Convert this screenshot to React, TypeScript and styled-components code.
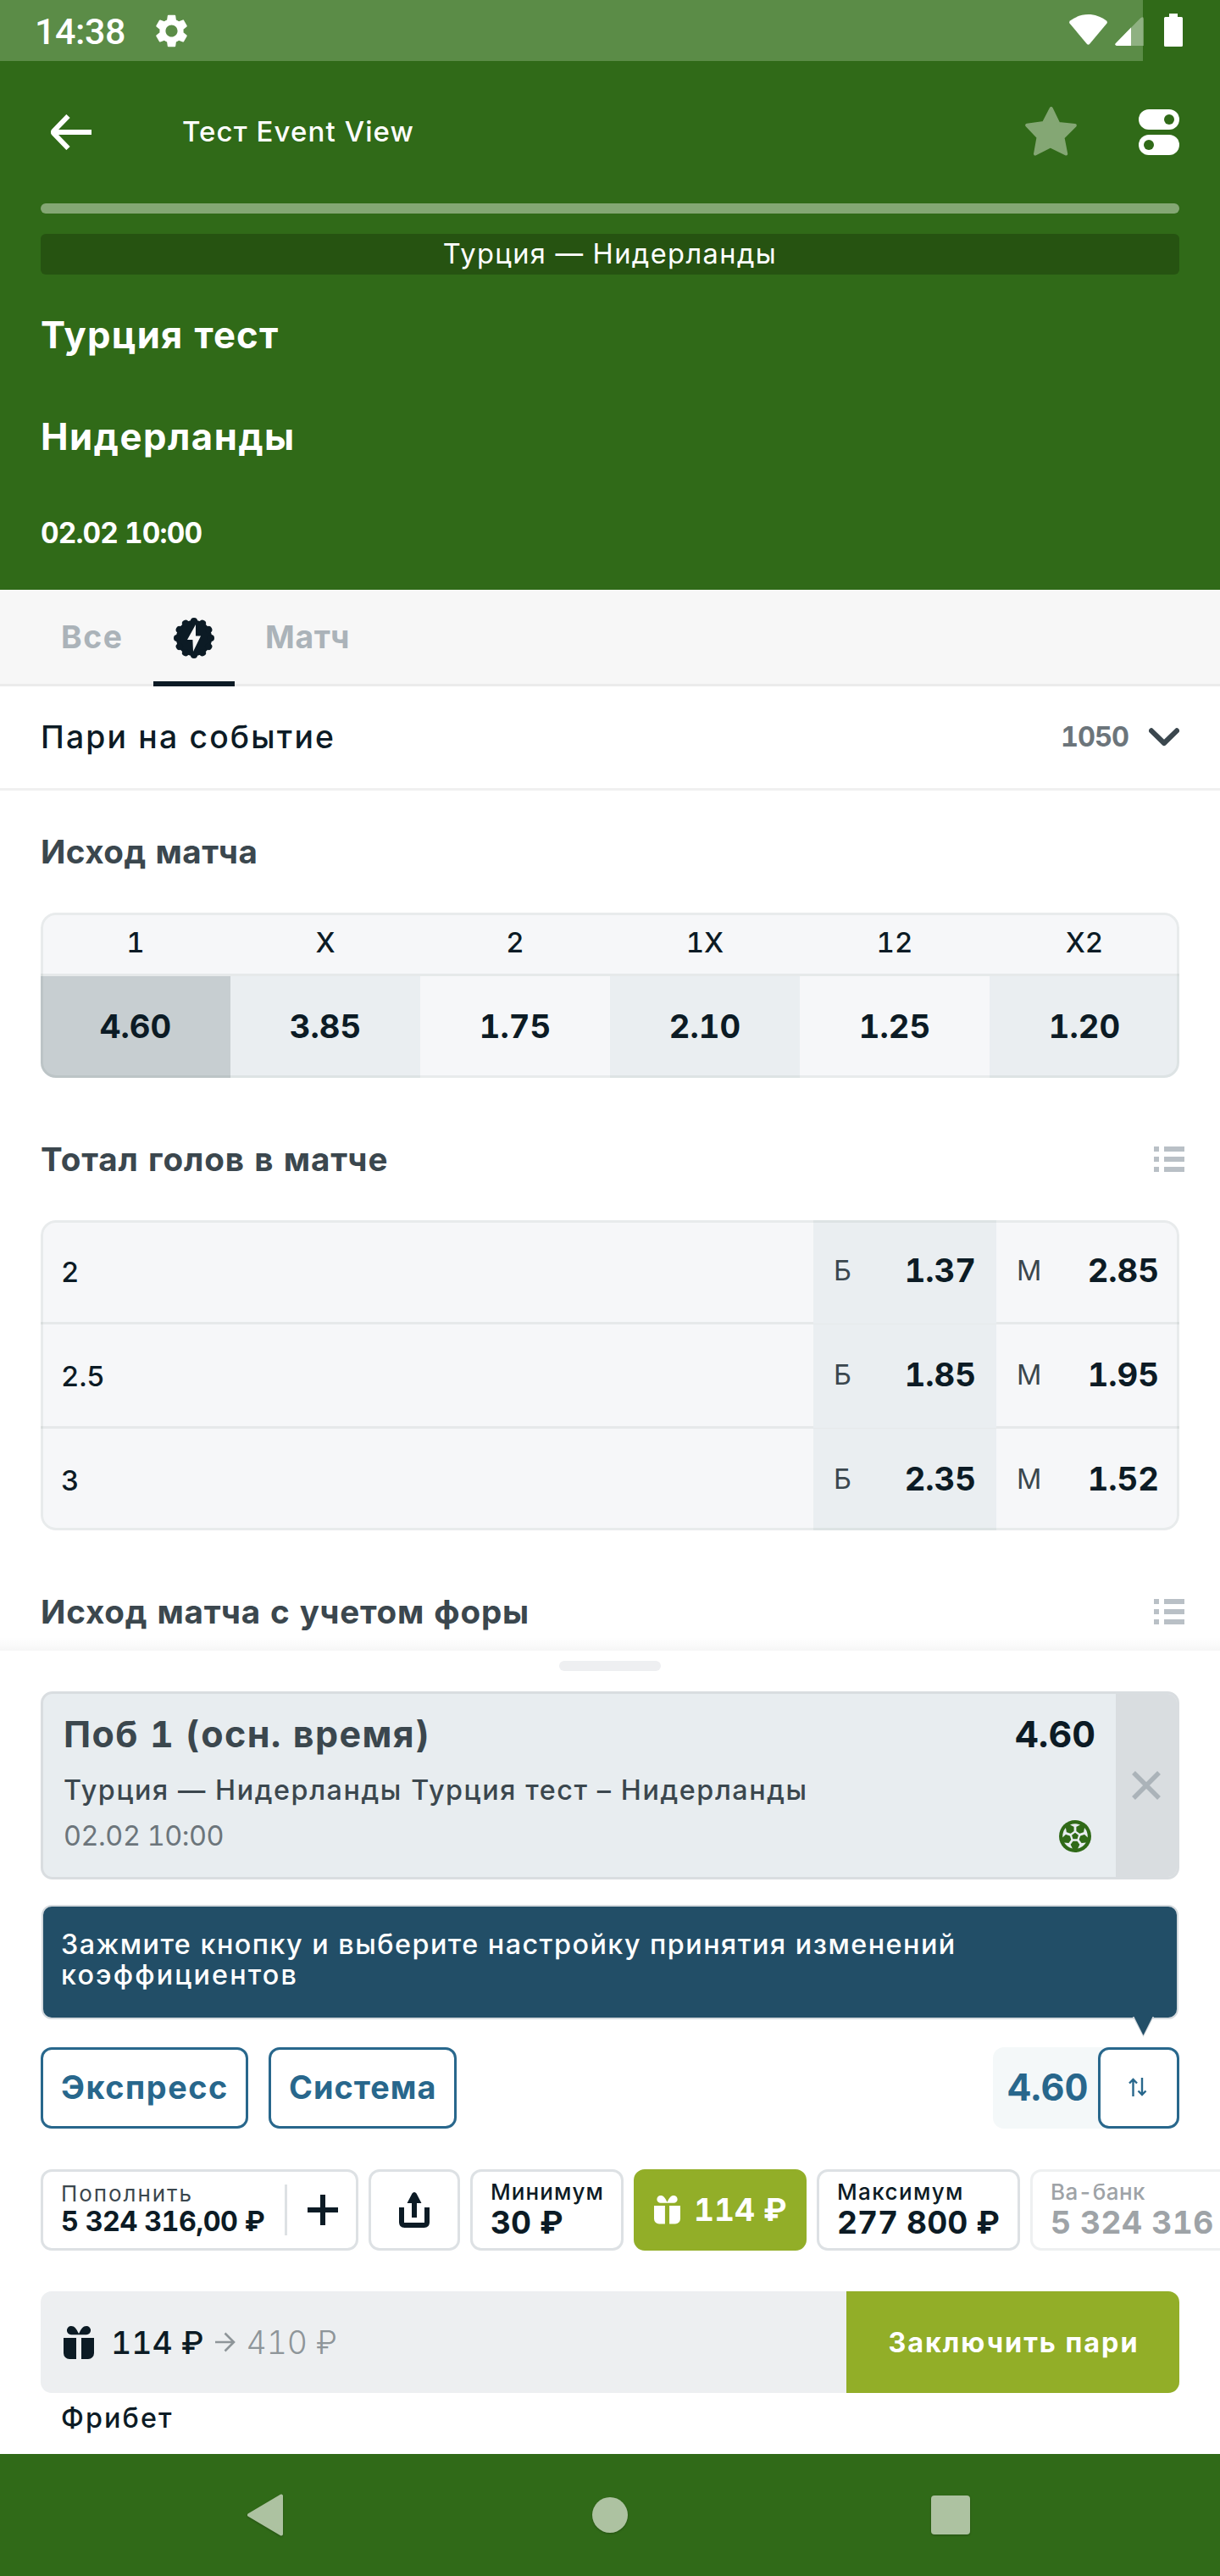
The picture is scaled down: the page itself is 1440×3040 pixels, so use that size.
import React from "react";
import styled, { createGlobalStyle, css } from "styled-components";
import { MdSettings } from "react-icons/md";

const color = {
  green: "#306a18",
  greenLight: "#5b8c47",
  greenSoft: "#84a774",
  greenDark: "#265311",
  lime: "#92ae28",
  ink: "#0c1b25",
  slate: "#3b474e",
  grey: "#6c757b",
  mute: "#abb3b9",
  line: "#dde1e4",
  cell: "#f6f7f9",
  cellAlt: "#eaeef1",
  blue: "#28678c",
  navy: "#224e67",
};

const GlobalStyle = createGlobalStyle`
  *, *::before, *::after { box-sizing: border-box; }
  body {
    margin: 0;
    background: #fff;
    color: ${color.ink};
    font-family: Inter, "Liberation Sans", sans-serif;
    font-variant-numeric: tabular-nums;
  }
  svg { display: block; flex: none; }
`;

interface TypeProps {
  $ls?: number;
}

const type = (size: number, weight: number, line: number) => css<TypeProps>`
  font-size: ${size}px;
  font-weight: ${weight};
  line-height: ${line}px;
  letter-spacing: ${(p) => p.$ls ?? 0}px;
  white-space: nowrap;
`;

const Screen = styled.div`
  width: 1440px;
  height: 3040px;
  display: flex;
  flex-direction: column;
  overflow: hidden;
`;

/* ---------- status bar ---------- */

const StatusBar = styled.div`
  height: 72px;
  display: flex;
  background: linear-gradient(to right, ${color.greenLight} 1349px, ${color.green} 1349px);
`;
const StatusLeft = styled.div`
  flex: 1;
  display: flex;
  align-items: center;
  padding-left: 41px;
  color: #fff;
`;
const Clock = styled.span`
  ${type(43, 500, 50)}
  font-family: Roboto, sans-serif;
  padding-top: 2px;
  width: 138px;
`;
const StatusRight = styled.div`
  display: flex;
  align-items: flex-start;
  padding: 16px 44px 0 0;
`;
const Wifi = styled.svg`
  margin-top: 1px;
`;
const Signal = styled.svg`
  margin: 4px 24px 0 9px;
`;

/* ---------- event header ---------- */

const Header = styled.header`
  height: 624px;
  background: ${color.green};
  color: #fff;
  padding: 0 48px;
`;
const AppBar = styled.div`
  height: 168px;
  display: flex;
  align-items: center;
`;
const BackIcon = styled.svg`
  margin-left: 12px;
`;
const Title = styled.h1`
  ${type(33, 500, 40)}
  margin: 0 auto 2px 107px;
`;
const StarIcon = styled.svg`
  margin: 0 73px 2px 0;
`;
const Progress = styled.div`
  height: 12px;
  border-radius: 6px;
  background: ${color.greenSoft};
`;
const Banner = styled.div`
  height: 48px;
  margin-top: 24px;
  border-radius: 6px;
  background: ${color.greenDark};
  display: flex;
  justify-content: center;
  ${type(32.6, 400, 47)}
`;
const Teams = styled.div`
  padding-top: 12px;
`;
const Team = styled.div`
  ${type(43.6, 700, 120)}
`;
const Kickoff = styled.div`
  ${type(33.4, 700, 107)}
`;

/* ---------- market tabs ---------- */

const Tabs = styled.nav`
  height: 114px;
  flex: none;
  background: #f7f7f7;
  border-bottom: 3px solid #ebebeb;
  display: flex;
  gap: 12px;
  padding-left: 48px;
`;
const Tab = styled.div<{ $width: number; $active?: boolean } & TypeProps>`
  ${type(37.3, 700, 112)}
  height: 114px;
  width: ${(p) => p.$width}px;
  padding-left: 24px;
  color: ${color.mute};
  ${(p) =>
    p.$active &&
    css`
      padding-top: 33px;
      border-bottom: 6px solid ${color.ink};
    `}
`;

/* ---------- market list ---------- */

const Markets = styled.main`
  position: relative;
  height: 1138px;
  flex: none;
  overflow: hidden;
`;
const EventRow = styled.div`
  height: 123px;
  border-bottom: 3px solid #f0f0f0;
  padding: 0 48px;
  display: flex;
  align-items: center;
`;
const EventName = styled.span`
  ${type(37.3, 500, 50)}
  flex: 1;
`;
const EventCount = styled.span`
  ${type(32.5, 700, 50)}
  color: ${color.grey};
  margin-right: 24px;
`;
const MarketTitle = styled.div<{ $gap?: number }>`
  height: 144px;
  margin-top: ${(p) => p.$gap ?? 0}px;
  padding: 0 42px 0 48px;
  display: flex;
  align-items: center;
  justify-content: space-between;
`;
const MarketName = styled.h2`
  ${type(38.6, 700, 50)}
  margin: 0 0 1px;
  color: ${color.slate};
`;
const Table = styled.div`
  position: relative;
  margin: 0 48px;
  border-radius: 18px;
  overflow: hidden;
  background: ${color.cell};
  &::after {
    content: "";
    position: absolute;
    inset: 0;
    border: 3px solid rgba(10, 50, 30, 0.06);
    border-radius: 18px;
  }
`;
const OutcomeGrid = styled.div`
  display: grid;
  grid-template-columns: repeat(6, 224px);
`;
const OutcomeHead = styled.div`
  ${type(33, 500, 70)}
  height: 75px;
  border-bottom: 3px solid #e6e9ea;
  text-align: center;
`;
const OutcomeOdds = styled.div<{ $tone: "plain" | "alt" | "picked" }>`
  ${type(38.2, 700, 118)}
  height: 120px;
  text-align: center;
  background: ${(p) => ({ plain: color.cell, alt: color.cellAlt, picked: "#c7ced1" })[p.$tone]};
`;
const TotalRow = styled.div`
  height: 120px;
  display: grid;
  grid-template-columns: 912px 216px 216px;
  & + & {
    height: 123px;
    border-top: 3px solid #e6e9ea;
  }
`;
const TotalLabel = styled.div`
  ${type(33, 500, 122)}
  padding-left: 24px;
`;
const TotalCell = styled.div<{ $alt?: boolean }>`
  display: flex;
  justify-content: space-between;
  padding: 0 24px;
  background: ${(p) => (p.$alt ? color.cellAlt : "transparent")};
`;
const TotalSide = styled.span`
  ${type(32.5, 400, 119)}
  color: ${color.slate};
`;
const TotalOdds = styled.span`
  ${type(38.2, 700, 118)}
`;
const SheetShadow = styled.div`
  position: absolute;
  left: 0;
  right: 0;
  bottom: 0;
  height: 16px;
  background: linear-gradient(rgba(0, 0, 0, 0), rgba(0, 0, 0, 0.035));
`;

/* ---------- bet slip sheet ---------- */

const Sheet = styled.section`
  height: 948px;
  flex: none;
  padding: 12px 0 0 48px;
  background: #fff;
`;
const Handle = styled.div`
  width: 120px;
  height: 12px;
  margin: 0 0 24px 612px;
  border-radius: 6px;
  background: #eeeff1;
`;
const BetCard = styled.div`
  width: 1344px;
  height: 222px;
  display: flex;
  border: 3px solid #d9dde0;
  border-radius: 14px;
  overflow: hidden;
  background: #e8edf0;
`;
const BetInfo = styled.div`
  flex: 1;
  padding: 14px 0 0 24px;
`;
const BetName = styled.div`
  ${type(43, 700, 66)}
  color: ${color.slate};
`;
const BetEvent = styled.div`
  ${type(32.3, 500, 67)}
  color: ${color.slate};
`;
const BetTime = styled.div`
  ${type(32.4, 400, 42)}
  color: ${color.grey};
`;
const BetSide = styled.div`
  padding: 14px 24px 0 0;
  display: flex;
  flex-direction: column;
  align-items: flex-end;
`;
const BetOdds = styled.span`
  ${type(43, 700, 66)}
`;
const BallIcon = styled.svg`
  margin: 69px 5px 0 0;
`;
const BetClose = styled.button`
  width: 72px;
  padding: 0;
  border: 0;
  background: #d9dde0;
  display: flex;
  align-items: center;
  justify-content: center;
`;
const Hint = styled.div`
  position: relative;
  width: 1342px;
  height: 135px;
  margin: 30px 0 33px 1px;
  padding: 27px 21px;
  border: 2px solid #d5dade;
  border-radius: 12px;
  background: ${color.navy};
  color: #fff;
`;
const HintLine = styled.div`
  ${type(32.3, 500, 36)}
`;
const HintTail = styled.svg`
  position: absolute;
  left: 1286px;
  top: 130px;
`;
const ModeRow = styled.div`
  width: 1344px;
  display: flex;
`;
const ModeButton = styled.button<{ $width: number } & TypeProps>`
  ${type(37.8, 700, 88)}
  width: ${(p) => p.$width}px;
  height: 96px;
  margin-right: 24px;
  padding: 0 0 2px 21px;
  border: 3px solid ${color.blue};
  border-radius: 13px;
  background: #fff;
  color: ${color.blue};
  font-family: inherit;
  text-align: left;
`;
const TotalOddsBox = styled.div`
  ${type(43.3, 700, 94)}
  width: 142px;
  height: 96px;
  margin: 0 -18px 0 auto;
  padding-left: 17px;
  border-radius: 13px;
  background: #f4f8f9;
  color: ${color.blue};
`;
const SwapButton = styled.button`
  width: 96px;
  height: 96px;
  padding: 0 2px 2px 0;
  border: 3px solid ${color.blue};
  border-radius: 13px;
  background: #fff;
  display: flex;
  align-items: center;
  justify-content: center;
  z-index: 1;
`;
const ChipRow = styled.div`
  margin-top: 48px;
  display: flex;
  gap: 12px;
  overflow: hidden;
`;
const Chip = styled.div<{ $width: number; $kind?: "lime" | "faded" }>`
  width: ${(p) => p.$width}px;
  height: 96px;
  flex: none;
  display: flex;
  align-items: center;
  padding: 0 21px;
  border: 3px solid ${color.line};
  border-radius: 13px;
  ${(p) =>
    p.$kind === "lime" &&
    css`
      border-color: ${color.lime};
      background: ${color.lime};
      color: #fff;
    `}
  ${(p) =>
    p.$kind === "faded" &&
    css`
      border-color: #eef0f1;
      color: #9ea3a7;
    `}
`;
const ChipText = styled.div<{ $lift: number }>`
  display: flex;
  flex-direction: column;
  align-items: flex-start;
  padding-bottom: ${(p) => p.$lift}px;
`;
const ChipLabel = styled.span`
  ${type(26, 500, 36)}
`;
const ChipValue = styled.span`
  ${type(37.2, 700, 36)}
`;
const BalanceLabel = styled.span`
  ${type(26, 400, 32)}
  color: ${color.slate};
`;
const BalanceValue = styled.span`
  ${type(32.3, 700, 34)}
`;
const Divider = styled.div`
  width: 3px;
  height: 60px;
  margin: 0 24px 0 auto;
  background: ${color.line};
`;
const FreebetValue = styled.span`
  ${type(37.2, 700, 88)}
  margin-left: 16px;
`;
const StakeRow = styled.div`
  width: 1344px;
  height: 120px;
  margin-top: 48px;
  display: flex;
  border-radius: 13px;
  overflow: hidden;
`;
const StakeField = styled.div`
  width: 951px;
  display: flex;
  align-items: center;
  padding-left: 27px;
  background: #edeff1;
`;
const Stake = styled.span`
  ${type(37.4, 500, 119)}
  margin-left: 20px;
`;
const StakeArrow = styled.svg`
  margin: 0 12px 0 14px;
`;
const Payout = styled.span`
  ${type(37.4, 300, 119)}
  color: #8e9599;
`;
const SubmitButton = styled.button`
  ${type(32.3, 700, 118)}
  flex: 1;
  padding: 1px 0 0 2px;
  border: 0;
  background: ${color.lime};
  color: #fff;
  font-family: inherit;
  text-align: center;
`;
const StakeNote = styled.div`
  ${type(32.3, 500, 59)}
  padding-left: 24px;
`;

/* ---------- system navigation ---------- */

const NavBar = styled.footer`
  height: 144px;
  flex: none;
  display: flex;
  align-items: center;
  gap: 358px;
  padding-left: 292px;
  background: ${color.green};
  svg {
    filter: drop-shadow(0 1px 1px rgba(0, 0, 0, 0.25));
  }
`;
const NavBack = styled.svg`
  margin-right: 7px;
`;

/* ---------- icons ---------- */

const Badge = () => (
  <svg width="48" height="48" viewBox="0 0 48 48" fill={color.ink}>
    <circle cx="24" cy="24" r="21.2" />
    {Array.from({ length: 12 }, (_, i) => (
      <circle key={i} cx="24" cy="4.1" r="4.1" transform={`rotate(${i * 30} 24 24)`} />
    ))}
    <path d="M26 8 16 26h6.4l.6 14 9-18.500h-6z" fill="#f7f7f7" />
  </svg>
);

const ListIcon = () => (
  <svg width="36" height="30" viewBox="0 0 36 30" fill="#b9c0c6">
    {[0, 12, 24].map((y) => (
      <path key={y} d={`M0 ${y}h6v6H0zM12 ${y}h24v6H12z`} />
    ))}
  </svg>
);

const Gift = ({ size }: { size: number }) => (
  <svg width={size} height={(size * 39) / 36} viewBox="0 0 36 39" fill="currentColor">
    <path d="M0 14h15v25H7a7 7 0 0 1-7-7zM21 14h15v18a7 7 0 0 1-7 7h-8z" />
    <path d="M9 0c4 0 6 3 9 9 3-6 5-9 9-9a5 5 0 0 1 0 10.200H9A5 5 0 0 1 9 0z" />
  </svg>
);

const Ball = () => (
  <BallIcon width="38" height="38" viewBox="-19 -19 38 38">
    <circle r="19" fill={color.green} />
    {[0, 72, 144, 216, 288].map((a) => (
      <g key={a} transform={`rotate(${a})`} fill="#e8edf0">
        <path d="M-6-13.600Q0-16 6-13.600L1.600-11.200H-1.600z" />
        <path d="M-1.400-12.500h2.800v7h-2.800z" />
      </g>
    ))}
    <path d="M0-5.600 5.300-1.700 3.300 4.500H-3.300L-5.300-1.700z" fill={color.green} stroke="#e8edf0" strokeWidth="2.300" />
  </BallIcon>
);

/* ---------- data ---------- */

const outcomes = [
  { name: "1", odds: "4.60", tone: "picked" },
  { name: "X", odds: "3.85", tone: "alt" },
  { name: "2", odds: "1.75", tone: "plain" },
  { name: "1X", odds: "2.10", tone: "alt" },
  { name: "12", odds: "1.25", tone: "plain" },
  { name: "X2", odds: "1.20", tone: "alt" },
] as const;

const totals = [
  { label: "2", over: "1.37", under: "2.85" },
  { label: "2.5", over: "1.85", under: "1.95" },
  { label: "3", over: "2.35", under: "1.52" },
];

export default function App() {
  return (
    <Screen>
      <GlobalStyle />
      <StatusBar>
        <StatusLeft>
          <Clock $ls={-0.4}>14:38</Clock>
          <MdSettings size={47} />
        </StatusLeft>
        <StatusRight>
          <Wifi width="45" height="36" viewBox="0 0 45 36" fill="#fff">
            <path d="M1 7.500C14-2.500 31-2.500 44 7.500q1.500 1.500.500 3L24 35q-1.500 1.500-3 0L.500 10.500q-1-1.500.500-3z" />
          </Wifi>
          <Signal width="34" height="34" viewBox="0 0 34 34" fill="#fff">
            <path d="M30 1.500q4-3 4 1V34H2q-3-1-1-3z" opacity=".32" />
            <path d="M19 12.500V34H2q-3-1-1-3z" />
          </Signal>
          <svg width="22" height="39" viewBox="0 0 22 39" fill="#fff">
            <path d="M6 0h10v4h4.500Q22 4 22 5.500v32q0 1.500-1.500 1.500h-19Q0 39 0 37.500v-32Q0 4 1.500 4H6z" />
          </svg>
        </StatusRight>
      </StatusBar>

      <Header>
        <AppBar>
          <BackIcon width="48" height="42" viewBox="0 0 48 42" fill="none" stroke="#fff" strokeWidth="6" strokeLinejoin="round">
            <path d="M20.500 2 3.500 19.500q-1.200 1.500 0 3L20.500 40M3 21h45" />
          </BackIcon>
          <Title $ls={1.09}>Тест Event View</Title>
          <StarIcon width="61" height="58" viewBox="0 0 61 58" fill={color.greenSoft} stroke={color.greenSoft} strokeWidth="4" strokeLinejoin="round">
            <path d="M30.800 2 39.500 20 58.800 22 44.500 36.300 48.200 55.500 29.800 46.500 12 55.500 15.500 36 2.200 21.800 22 19z" />
          </StarIcon>
          <svg width="48" height="54" viewBox="0 0 48 54" fill="#fff">
            <rect width="48" height="24" rx="12" />
            <rect y="30" width="48" height="24" rx="12" />
            <circle cx="36" cy="12" r="6" fill={color.green} />
            <circle cx="12" cy="42" r="6" fill={color.green} />
          </svg>
        </AppBar>
        <Progress />
        <Banner $ls={1.4}>Турция — Нидерланды</Banner>
        <Teams>
          <Team $ls={1.25}>Турция тест</Team>
          <Team $ls={1.54}>Нидерланды</Team>
          <Kickoff $ls={-0.86}>02.02 10:00</Kickoff>
        </Teams>
      </Header>

      <Tabs>
        <Tab $width={121} $ls={1.54}>
          Все
        </Tab>
        <Tab $width={96} $active>
          <Badge />
        </Tab>
        <Tab $width={160} $ls={0.69}>
          Матч
        </Tab>
      </Tabs>

      <Markets>
        <EventRow>
          <EventName $ls={2.17}>Пари на событие</EventName>
          <EventCount $ls={-1}>1050</EventCount>
          <svg width="36" height="22" viewBox="0 0 36 22" fill="none" stroke={color.slate} strokeWidth="6" strokeLinecap="round" strokeLinejoin="round">
            <path d="M3 3.300 18 18 33 3.300" />
          </svg>
        </EventRow>

        <MarketTitle>
          <MarketName $ls={0.47}>Исход матча</MarketName>
        </MarketTitle>
        <Table>
          <OutcomeGrid>
            {outcomes.map((o) => (
              <OutcomeHead key={o.name}>{o.name}</OutcomeHead>
            ))}
            {outcomes.map((o) => (
              <OutcomeOdds key={o.name} $tone={o.tone}>
                {o.odds}
              </OutcomeOdds>
            ))}
          </OutcomeGrid>
        </Table>

        <MarketTitle $gap={24}>
          <MarketName $ls={0.91}>Тотал голов в матче</MarketName>
          <ListIcon />
        </MarketTitle>
        <Table>
          {totals.map((t) => (
            <TotalRow key={t.label}>
              <TotalLabel>{t.label}</TotalLabel>
              <TotalCell $alt>
                <TotalSide>Б</TotalSide>
                <TotalOdds>{t.over}</TotalOdds>
              </TotalCell>
              <TotalCell>
                <TotalSide>М</TotalSide>
                <TotalOdds>{t.under}</TotalOdds>
              </TotalCell>
            </TotalRow>
          ))}
        </Table>

        <MarketTitle $gap={24}>
          <MarketName $ls={0.79}>Исход матча с учетом форы</MarketName>
          <ListIcon />
        </MarketTitle>
        <SheetShadow />
      </Markets>

      <Sheet>
        <Handle />
        <BetCard>
          <BetInfo>
            <BetName $ls={1.4}>Поб 1 (осн. время)</BetName>
            <BetEvent $ls={1.59}>Турция — Нидерланды Турция тест – Нидерланды</BetEvent>
            <BetTime $ls={-0.45}>02.02 10:00</BetTime>
          </BetInfo>
          <BetSide>
            <BetOdds>4.60</BetOdds>
            <Ball />
          </BetSide>
          <BetClose>
            <svg width="34" height="34" viewBox="0 0 34 34" stroke={color.mute} strokeWidth="5.500">
              <path d="M2 2 32 32M32 2 2 32" />
            </svg>
          </BetClose>
        </BetCard>

        <Hint>
          <HintLine $ls={1.48}>Зажмите кнопку и выберите настройку принятия изменений</HintLine>
          <HintLine $ls={2.17}>коэффициентов</HintLine>
          <HintTail width="25" height="24" viewBox="0 0 25 24">
            <path d="M0 0h25L12.500 24z" fill="#d5dade" />
            <path d="M1.500 0h22L12.500 22z" fill={color.navy} />
          </HintTail>
        </Hint>

        <ModeRow>
          <ModeButton $width={245} $ls={1.55}>
            Экспресс
          </ModeButton>
          <ModeButton $width={222} $ls={1.03}>
            Система
          </ModeButton>
          <TotalOddsBox>4.60</TotalOddsBox>
          <SwapButton>
            <svg width="22" height="22" viewBox="0 0 22 22" fill="none" stroke={color.blue} strokeWidth="2.400">
              <path d="M5.500 22V2M1 6.500 5.500 2 10 6.500M16 0v20M11.500 15.500 16 20l4.500-4.500" />
            </svg>
          </SwapButton>
        </ModeRow>

        <ChipRow>
          <Chip $width={375}>
            <ChipText $lift={4}>
              <BalanceLabel $ls={1.94}>Пополнить</BalanceLabel>
              <BalanceValue $ls={-0.45}>5 324 316,00 ₽</BalanceValue>
            </ChipText>
            <Divider />
            <svg width="36" height="36" viewBox="0 0 36 36" stroke={color.ink} strokeWidth="6">
              <path d="M18 0v36M0 18h36" />
            </svg>
          </Chip>
          <Chip $width={108}>
            <svg width="60" height="42" viewBox="-12 0 60 42" fill={color.ink}>
              <path d="M3 18v17.500Q3 39 6.500 39h23q3.500 0 3.500-3.500V18" fill="none" stroke={color.ink} strokeWidth="6" />
              <path d="M18 0q1.500 0 2.500 1.500L26.500 13H21v17h-6V13H9.500l6-11.500Q16.500 0 18 0z" />
            </svg>
          </Chip>
          <Chip $width={181}>
            <ChipText $lift={7}>
              <ChipLabel $ls={1.08}>Минимум</ChipLabel>
              <ChipValue>30 ₽</ChipValue>
            </ChipText>
          </Chip>
          <Chip $width={204} $kind="lime">
            <Gift size={31} />
            <FreebetValue>114 ₽</FreebetValue>
          </Chip>
          <Chip $width={240}>
            <ChipText $lift={7}>
              <ChipLabel $ls={1.38}>Максимум</ChipLabel>
              <ChipValue>277 800 ₽</ChipValue>
            </ChipText>
          </Chip>
          <Chip $width={300} $kind="faded">
            <ChipText $lift={7}>
              <ChipLabel $ls={0.39}>Ва-банк</ChipLabel>
              <ChipValue $ls={0.5}>5 324 316</ChipValue>
            </ChipText>
          </Chip>
        </ChipRow>

        <StakeRow>
          <StakeField>
            <Gift size={36} />
            <Stake>114 ₽</Stake>
            <StakeArrow width="24" height="24" viewBox="0 0 24 24" fill="none" stroke="#8e9599" strokeWidth="2.600">
              <path d="M0 12h22M11.500 1.500 22 12 11.500 22.500" />
            </StakeArrow>
            <Payout>410 ₽</Payout>
          </StakeField>
          <SubmitButton $ls={1.99}>Заключить пари</SubmitButton>
        </StakeRow>
        <StakeNote $ls={2.1}>Фрибет</StakeNote>
      </Sheet>

      <NavBar>
        <NavBack width="42" height="50" viewBox="0 0 42 50" fill="#adc2a1" stroke="#adc2a1" strokeWidth="4" strokeLinejoin="round">
          <path d="M2 25 40 2.500v45z" />
        </NavBack>
        <svg width="42" height="42" viewBox="0 0 42 42" fill="#adc2a1">
          <circle cx="21" cy="21" r="21" />
        </svg>
        <svg width="46" height="46" viewBox="0 0 46 46" fill="#adc2a1">
          <rect width="46" height="46" rx="4" />
        </svg>
      </NavBar>
    </Screen>
  );
}
